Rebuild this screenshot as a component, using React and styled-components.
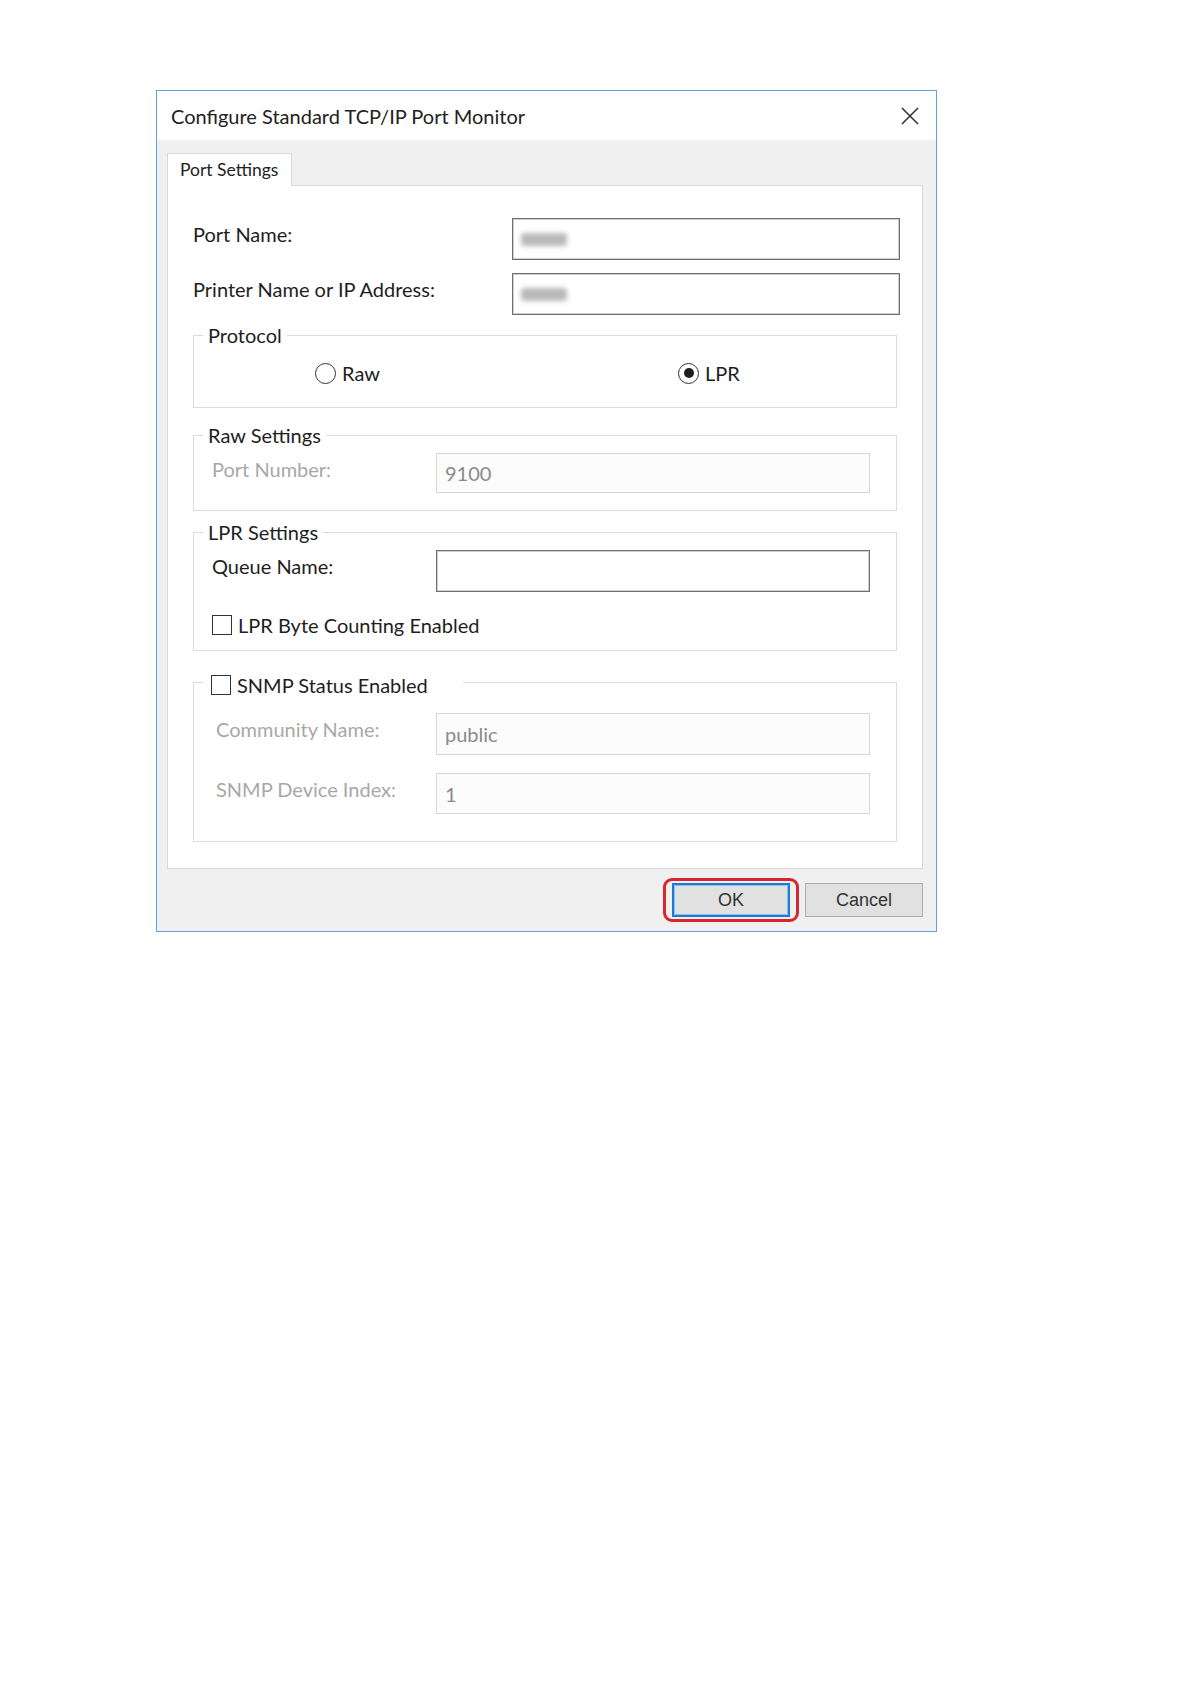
import React from "react";
import styled, { createGlobalStyle } from "styled-components";

const GlobalStyle = createGlobalStyle`
  body {
    margin: 0;
    background: #fff;
    font-family: Lato, "Liberation Sans", sans-serif;
    color: #1e1e1e;
  }
`;

const Page = styled.div`
  padding: 90px 0 0 156px;
  min-height: 1684px;
  box-sizing: border-box;
`;

const Dialog = styled.div`
  width: 781px;
  box-sizing: border-box;
  border: 1px solid #62a2de;
  background: #f0f0f0;
`;

const TitleBar = styled.div`
  height: 49px;
  display: flex;
  align-items: center;
  justify-content: space-between;
  padding: 0 17px 0 14px;
  background: #fff;
`;

const Title = styled.div`
  font-size: 20px;
  color: #222;
`;

const Body = styled.div`
  padding: 13px 13px 14px 10px;
`;

const Tab = styled.div`
  width: 125px;
  height: 33px;
  box-sizing: border-box;
  margin-bottom: -1px;
  position: relative;
  z-index: 1;
  border: 1px solid #d9d9d9;
  border-bottom: none;
  background: #fff;
  padding: 5px 0 0 12px;
  font-size: 17.5px;
  line-height: 22px;
  color: #222;
`;

const Panel = styled.div`
  border: 1px solid #d9d9d9;
  background: #fff;
  padding: 32px 22px 26px 25px;
`;

const FieldRow = styled.div`
  display: grid;
  grid-template-columns: ${p => p.$label}px ${p => p.$input}px;
  align-items: start;
  margin-bottom: ${p => p.$gap || 0}px;
`;

const Label = styled.div`
  padding-top: 4px;
  font-size: 20px;
  line-height: 24px;
  color: ${p => (p.$disabled ? "#a8a8a8" : "#1e1e1e")};
`;

const TextBox = styled.div`
  height: ${p => p.$h || 42}px;
  box-sizing: border-box;
  display: flex;
  align-items: center;
  padding-left: 8px;
  font-size: 20px;
  color: #8a8a8a;
  background: ${p => (p.$disabled ? "#fcfcfc" : "#fff")};
  border: 1px solid ${p => (p.$disabled ? "#d6d6d6" : "#6f6f6f")};
  box-shadow: ${p => (p.$disabled ? "none" : "inset 0 0 0 1px #cfcfcf")};
`;

const Blurred = styled.span`
  display: block;
  width: 46px;
  height: 13px;
  border-radius: 3px;
  background: #b9b9b9;
  filter: blur(2.5px);
`;

const GroupBox = styled.fieldset`
  margin: ${p => p.$top || 0}px 3px 0 0;
  padding: 0;
  min-width: 0;
  border: 1px solid #dcdcdc;
`;

const Legend = styled.legend`
  margin-left: 9px;
  padding: 0 5px;
  font-size: 20px;
  line-height: 20px;
  color: #1e1e1e;
`;

const CheckLegend = styled.legend`
  margin-left: 9px;
  padding: 6px 35px 0 8px;
  font-size: 20px;
  line-height: 24px;
  color: #1e1e1e;
`;

const GroupContent = styled.div`
  padding: ${p => p.$pad};
`;

const RadioRow = styled.div`
  display: grid;
  grid-template-columns: 363px auto;
  padding: 16px 0 22px 121px;
`;

const Option = styled.label`
  display: flex;
  align-items: center;
  gap: 6px;
  font-size: 20px;
  line-height: 24px;
  color: #1e1e1e;
`;

const Radio = styled.span`
  width: 21px;
  height: 21px;
  box-sizing: border-box;
  border-radius: 50%;
  border: 1.5px solid #333;
  background: #fff;
  display: flex;
  align-items: center;
  justify-content: center;

  &::after {
    content: "";
    width: 10px;
    height: 10px;
    border-radius: 50%;
    background: ${p => (p.$checked ? "#1e1e1e" : "transparent")};
  }
`;

const Check = styled.span`
  width: 20px;
  height: 20px;
  box-sizing: border-box;
  border: 1.5px solid #333;
  background: #fff;
  flex: none;
`;

const CheckRow = styled(Option)`
  margin-top: 21px;
`;

const Footer = styled.div`
  display: flex;
  justify-content: flex-end;
  align-items: center;
  margin-top: 14px;
`;

const Highlight = styled.span`
  display: inline-flex;
  margin: -5px -9px;
  padding: 2px 6px;
  border: 3px solid #d9262e;
  border-radius: 9px;
`;

const Button = styled.button`
  width: 118px;
  height: 34px;
  box-sizing: border-box;
  margin-left: ${p => p.$ml || 0}px;
  background: #e1e1e1;
  border: ${p => (p.$default ? "2px solid #1f7bd4" : "1px solid #adadad")};
  box-shadow: ${p => (p.$default ? "inset 0 0 0 1px #8cc0ee" : "none")};
  font-family: "Liberation Sans", Arial, sans-serif;
  font-size: 18px;
  color: #333;
  padding: 0;
`;

function CloseIcon() {
  return (
    <svg width="18" height="18" viewBox="0 0 18 18">
      <path d="M1 1 L17 17 M17 1 L1 17" stroke="#333" strokeWidth="1.6" fill="none" />
    </svg>
  );
}

export default function App() {
  return (
    <Page>
      <GlobalStyle />
      <Dialog>
        <TitleBar>
          <Title>Configure Standard TCP/IP Port Monitor</Title>
          <CloseIcon />
        </TitleBar>
        <Body>
          <Tab>Port Settings</Tab>
          <Panel>
            <FieldRow $label={319} $input={388} $gap={13}>
              <Label>Port Name:</Label>
              <TextBox><Blurred /></TextBox>
            </FieldRow>
            <FieldRow $label={319} $input={388}>
              <Label>Printer Name or IP Address:</Label>
              <TextBox><Blurred /></TextBox>
            </FieldRow>

            <GroupBox $top={10}>
              <Legend>Protocol</Legend>
              <RadioRow>
                <Option><Radio />Raw</Option>
                <Option><Radio $checked />LPR</Option>
              </RadioRow>
            </GroupBox>

            <GroupBox $top={17}>
              <Legend>Raw Settings</Legend>
              <GroupContent $pad="8px 26px 17px 18px">
                <FieldRow $label={224} $input={434}>
                  <Label $disabled>Port Number:</Label>
                  <TextBox $disabled $h={40}>9100</TextBox>
                </FieldRow>
              </GroupContent>
            </GroupBox>

            <GroupBox $top={11}>
              <Legend>LPR Settings</Legend>
              <GroupContent $pad="8px 26px 13px 18px">
                <FieldRow $label={224} $input={434}>
                  <Label>Queue Name:</Label>
                  <TextBox />
                </FieldRow>
                <CheckRow><Check />LPR Byte Counting Enabled</CheckRow>
              </GroupContent>
            </GroupBox>

            <GroupBox $top={16}>
              <CheckLegend>
                <Option><Check />SNMP Status Enabled</Option>
              </CheckLegend>
              <GroupContent $pad="16px 26px 27px 22px">
                <FieldRow $label={220} $input={434} $gap={18}>
                  <Label $disabled>Community Name:</Label>
                  <TextBox $disabled>public</TextBox>
                </FieldRow>
                <FieldRow $label={220} $input={434}>
                  <Label $disabled>SNMP Device Index:</Label>
                  <TextBox $disabled $h={41}>1</TextBox>
                </FieldRow>
              </GroupContent>
            </GroupBox>
          </Panel>
          <Footer>
            <Highlight>
              <Button $default>OK</Button>
            </Highlight>
            <Button $ml={15}>Cancel</Button>
          </Footer>
        </Body>
      </Dialog>
    </Page>
  );
}
